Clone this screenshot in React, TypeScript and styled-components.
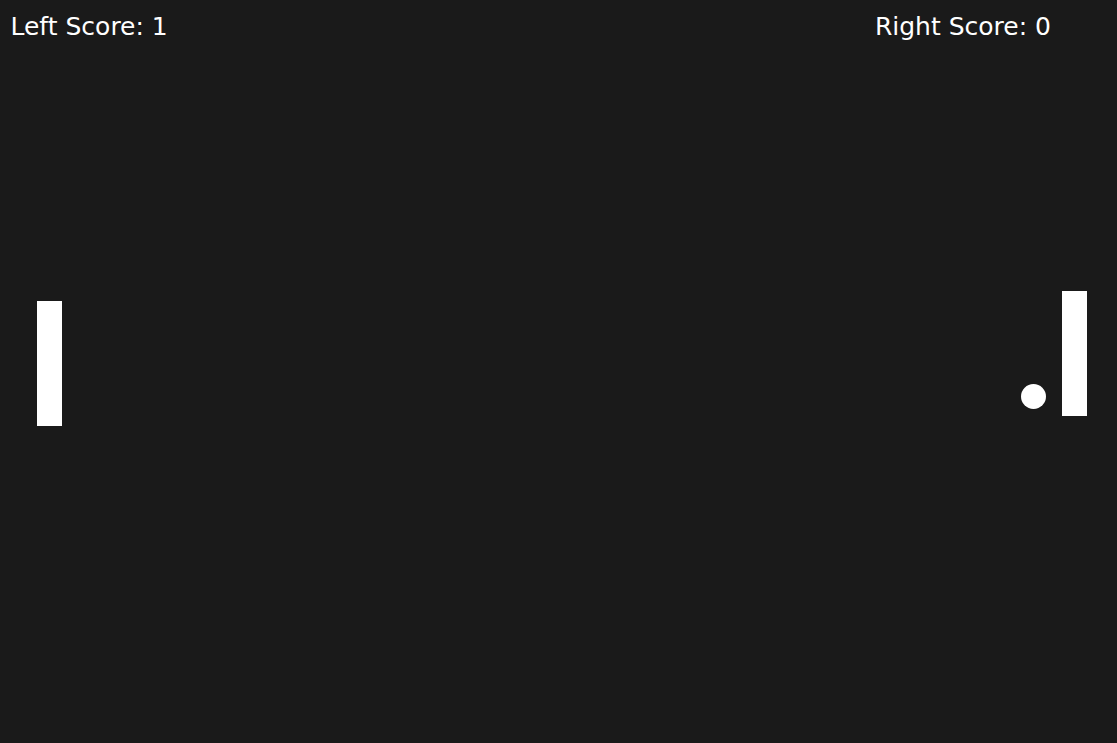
import React from "react";
import styled, { createGlobalStyle } from "styled-components";

const GlobalStyle = createGlobalStyle`
  html, body {
    margin: 0;
    padding: 0;
    background: #1a1a1a;
    overflow: hidden;
  }
  #root {
    width: 1117px;
    height: 743px;
  }
`;

const Board = styled.div`
  position: relative;
  width: 1117px;
  height: 743px;
  background: #1a1a1a;
  font-family: "DejaVu Sans", sans-serif;
  color: #ffffff;
`;

const ScoreBar = styled.div`
  display: flex;
  justify-content: space-between;
  align-items: flex-start;
  padding: 12px 66px 0 10.5px;
`;

const Score = styled.span`
  font-size: 25px;
  line-height: 29px;
  white-space: nowrap;
`;

const Paddle = styled.div<{ $x: number; $y: number }>`
  position: absolute;
  left: ${(p) => p.$x}px;
  top: ${(p) => p.$y}px;
  width: 25px;
  height: 125px;
  background: #ffffff;
`;

const Ball = styled.div<{ $x: number; $y: number }>`
  position: absolute;
  left: ${(p) => p.$x}px;
  top: ${(p) => p.$y}px;
  width: 25px;
  height: 25px;
  border-radius: 50%;
  background: #ffffff;
`;

export default function App() {
  return (
    <>
      <GlobalStyle />
      <Board>
        <ScoreBar>
          <Score>Left Score: 1</Score>
          <Score>Right Score: 0</Score>
        </ScoreBar>
        <Paddle $x={36.5} $y={300.5} />
        <Paddle $x={1061.5} $y={290.5} />
        <Ball $x={1021} $y={384} />
      </Board>
    </>
  );
}
